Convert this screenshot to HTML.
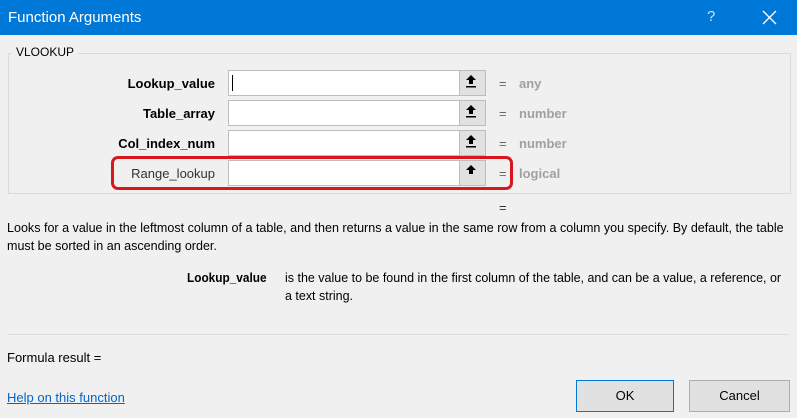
<!DOCTYPE html>
<html><head><style>
body{margin:0;width:797px;height:418px;background:#f0f0f0;font-family:"Liberation Sans",sans-serif;position:relative;overflow:hidden;color:#000}
.a{position:absolute}
.t{background:#0078d7;left:0;top:0;width:797px;height:35px}
.lbl{font-size:13px;font-weight:bold;text-align:right;width:120px;left:95px}
.in{left:228px;width:231px;height:24px;background:#fff;border:1px solid #bdbdbd}
.btn{left:459px;width:25px;height:24px;background:#e1e1e1;border:1px solid #bdbdbd}
.eq{left:499px;font-size:13px;color:#666}
.ty{left:519px;font-size:13px;color:#a0a0a0;font-weight:bold}
.n{white-space:nowrap;transform-origin:0 0}
</style></head><body>
<div class="a t"></div>
<div class="a n" style="left:8px;top:9px;color:#fff;font-size:15px">Function Arguments</div>
<div class="a" style="left:707px;top:8px;color:#cfe3f7;font-size:15px">?</div>
<svg class="a" style="left:762px;top:10px" width="15" height="15"><path d="M1 1L14 14M14 1L1 14" stroke="#fff" stroke-width="1.3"/></svg>
<div class="a" style="left:8px;top:53px;width:781px;height:139px;border:1px solid #dadada"></div>
<div class="a" style="left:12px;top:45px;background:#f0f0f0;padding:0 4px;font-size:12px">VLOOKUP</div>

<div class="a lbl" style="top:76px">Lookup_value</div>
<div class="a lbl" style="top:106px">Table_array</div>
<div class="a lbl" style="top:136px">Col_index_num</div>
<div class="a lbl" style="top:166px;font-weight:normal;color:#333">Range_lookup</div>

<div class="a in" style="top:70px"></div><div class="a" style="left:232px;top:75px;width:1px;height:16px;background:#000"></div>
<div class="a in" style="top:100px"></div>
<div class="a in" style="top:130px"></div>
<div class="a in" style="top:160px"></div>
<div class="a btn" style="top:70px"></div>
<div class="a btn" style="top:100px"></div>
<div class="a btn" style="top:130px"></div>
<div class="a btn" style="top:160px"></div>
<svg class="a" style="left:465px;top:75px" width="12" height="100">
<g fill="#000"><path d="M6 0L11 5H8V9H4V5H1Z"/><rect x="1" y="11" width="10" height="1.5"/></g>
<g fill="#000" transform="translate(0,30)"><path d="M6 0L11 5H8V9H4V5H1Z"/><rect x="1" y="11" width="10" height="1.5"/></g>
<g fill="#000" transform="translate(0,60)"><path d="M6 0L11 5H8V9H4V5H1Z"/><rect x="1" y="11" width="10" height="1.5"/></g>
<g fill="#000" transform="translate(0,90)"><path d="M6 0L11 5H8V9H4V5H1Z"/><rect x="1" y="11" width="10" height="1.5"/></g>
</svg>
<div class="a eq" style="top:76px">=</div><div class="a ty" style="top:76px">any</div>
<div class="a eq" style="top:106px">=</div><div class="a ty" style="top:106px">number</div>
<div class="a eq" style="top:136px">=</div><div class="a ty" style="top:136px">number</div>
<div class="a eq" style="top:166px">=</div><div class="a ty" style="top:166px">logical</div>
<div class="a" style="left:111px;top:156px;width:396px;height:28px;border:3px solid #d9161c;border-radius:7px"></div>

<div class="a eq" style="top:200px;color:#333">=</div>
<div class="a n" style="left:7px;top:220px;font-size:13px;transform:scaleX(0.965)">Looks for a value in the leftmost column of a table, and then returns a value in the same row from a column you specify. By default, the table</div>
<div class="a n" style="left:7px;top:238px;font-size:13px;transform:scaleX(0.965)">must be sorted in an ascending order.</div>
<div class="a n" style="left:187px;top:270px;font-size:13px;font-weight:bold;transform:scaleX(0.91)">Lookup_value</div>
<div class="a n" style="left:285px;top:270px;font-size:13px;transform:scaleX(0.96)">is the value to be found in the first column of the table, and can be a value, a reference, or</div>
<div class="a n" style="left:285px;top:288px;font-size:13px;transform:scaleX(0.96)">a text string.</div>
<div class="a" style="left:8px;top:334px;width:781px;height:1px;background:#dcdcdc"></div>
<div class="a n" style="left:7px;top:350px;font-size:13px">Formula result =</div>
<div class="a n" style="left:7px;top:390px;font-size:13px;color:#0066cc;text-decoration:underline">Help on this function</div>
<div class="a" style="left:576px;top:380px;width:96px;height:30px;background:#e1e1e1;border:1px solid #0078d7;font-size:13px;text-align:center;line-height:30px">OK</div>
<div class="a" style="left:689px;top:380px;width:99px;height:30px;background:#e1e1e1;border:1px solid #adadad;font-size:13px;text-align:center;line-height:30px">Cancel</div>
</body></html>
